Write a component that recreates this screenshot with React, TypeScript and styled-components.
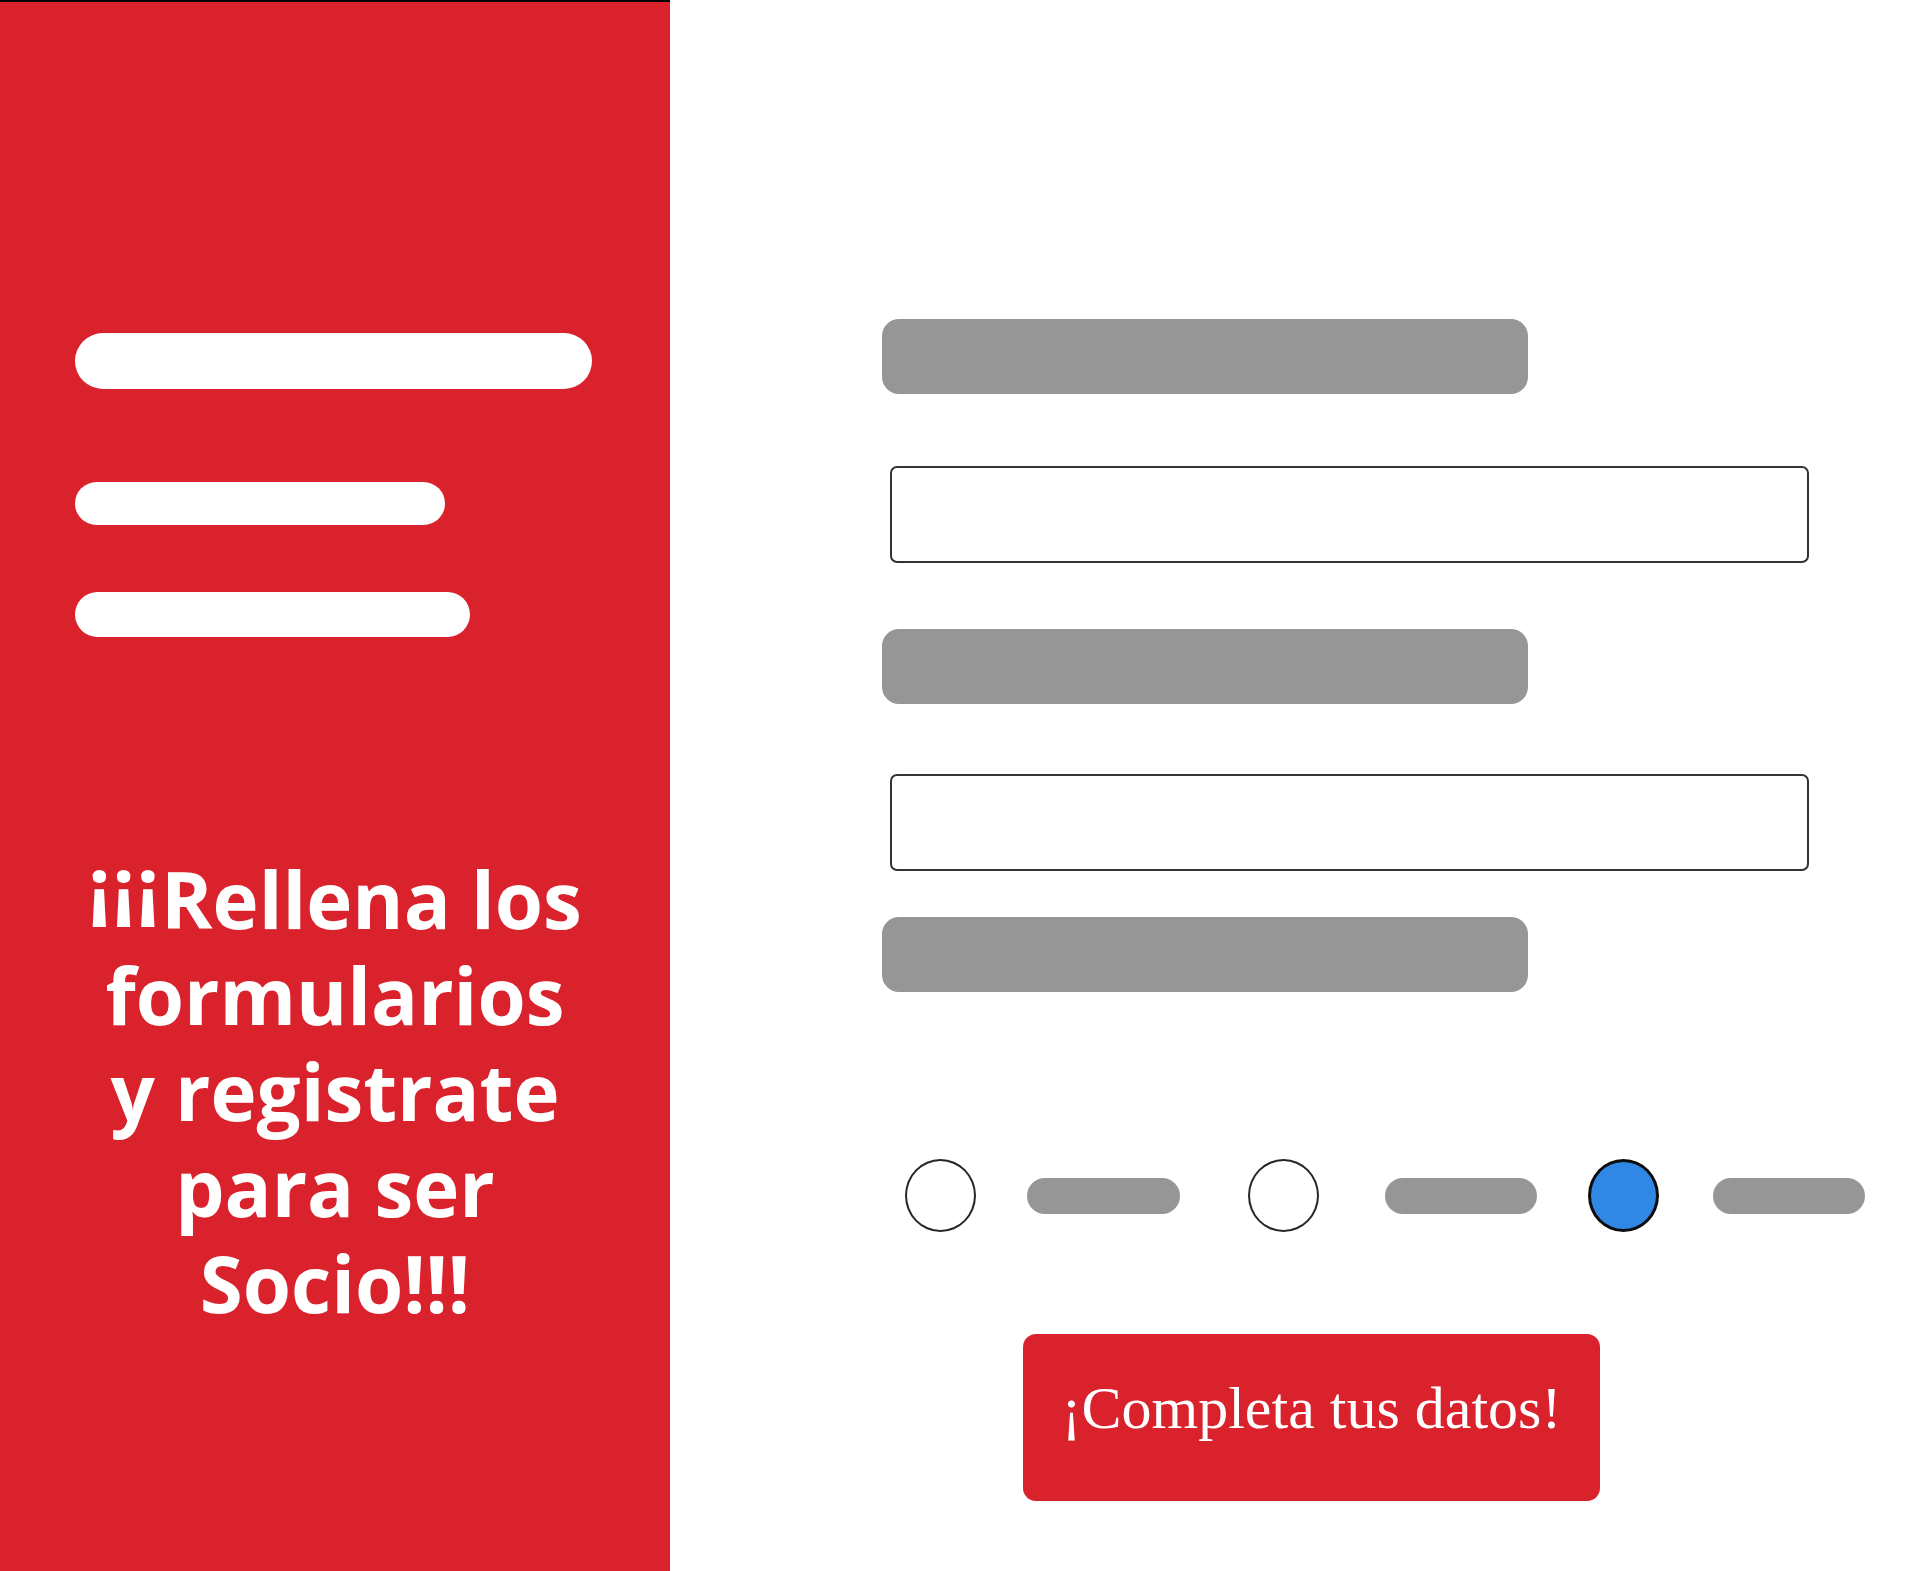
import React from "react";
import styled, { createGlobalStyle } from "styled-components";

const GlobalStyle = createGlobalStyle`
  html, body { margin: 0; padding: 0; background: #ffffff; }
  * { box-sizing: border-box; }
`;

const RED = "#da222d";
const GRAY = "#979697";

const Page = styled.div`
  display: flex;
  width: 1920px;
  height: 1571px;
  overflow: hidden;
`;

const SidePanel = styled.aside`
  width: 670px;
  flex: 0 0 670px;
  background: ${RED};
  border-top: 2px solid #000;
  padding: 331px 0 0 75px;
  display: flex;
  flex-direction: column;
  align-items: flex-start;
`;

const WhiteBar = styled.div<{ $w: number; $h: number; $mb: number }>`
  width: ${(p) => p.$w}px;
  height: ${(p) => p.$h}px;
  margin-bottom: ${(p) => p.$mb}px;
  background: #ffffff;
  border-radius: 999px;
`;

const Headline = styled.h1`
  margin: 214px 0 0 -75px;
  width: 670px;
  text-align: center;
  color: #ffffff;
  font-family: "Open Sans", "Liberation Sans", sans-serif;
  font-weight: 700;
  font-size: 78px;
  line-height: 96px;
  letter-spacing: 0;
`;

const Inverted = styled.span`
  position: relative;
  top: -0.2em;
  letter-spacing: 2px;
`;

const FormPanel = styled.main`
  flex: 1;
  background: #ffffff;
  padding: 319px 0 0 212px;
  display: flex;
  flex-direction: column;
  align-items: flex-start;
`;

const LabelBar = styled.div<{ $mb: number }>`
  width: 646px;
  height: 75px;
  background: ${GRAY};
  border-radius: 17px;
  margin-bottom: ${(p) => p.$mb}px;
`;

const Field = styled.input<{ $mb: number }>`
  display: block;
  width: 919px;
  height: 97px;
  margin: 0 0 ${(p) => p.$mb}px 8px;
  border: 2px solid #333333;
  border-radius: 7px;
  background: #ffffff;
  outline: none;
`;

const StepRow = styled.div`
  display: flex;
  align-items: center;
  margin-bottom: 102px;
`;

const StepDot = styled.span<{ $active?: boolean; $ml: number }>`
  display: block;
  width: 71px;
  height: 73px;
  margin-left: ${(p) => p.$ml}px;
  border-radius: 50%;
  background: ${(p) => (p.$active ? "#3088e4" : "#ffffff")};
  border: ${(p) => (p.$active ? "3px solid #0d0d0d" : "2px solid #262626")};
`;

const StepPill = styled.span<{ $ml: number; $w: number }>`
  display: block;
  width: ${(p) => p.$w}px;
  height: 36px;
  margin-left: ${(p) => p.$ml}px;
  border-radius: 18px;
  background: ${GRAY};
`;

const SubmitButton = styled.button`
  margin-left: 141px;
  width: 577px;
  height: 167px;
  padding: 0 0 18px 0;
  border: none;
  border-radius: 13px;
  background: ${RED};
  color: #ffffff;
  font-family: "Liberation Serif", "Times New Roman", serif;
  font-size: 60px;
  display: flex;
  align-items: center;
  justify-content: center;
  cursor: pointer;
`;

export default function App() {
  return (
    <>
      <GlobalStyle />
      <Page>
        <SidePanel>
          <WhiteBar $w={517} $h={56} $mb={93} />
          <WhiteBar $w={370} $h={43} $mb={67} />
          <WhiteBar $w={395} $h={45} $mb={0} />
          <Headline>
            <Inverted>¡¡¡</Inverted>Rellena los
            <br />
            formularios
            <br />
            y registrate
            <br />
            para ser
            <br />
            Socio!!!
          </Headline>
        </SidePanel>
        <FormPanel>
          <LabelBar $mb={72} />
          <Field $mb={66} aria-label="campo 1" />
          <LabelBar $mb={70} />
          <Field $mb={46} aria-label="campo 2" />
          <LabelBar $mb={167} />
          <StepRow>
            <StepDot $ml={23} />
            <StepPill $ml={51} $w={153} />
            <StepDot $ml={68} />
            <StepPill $ml={66} $w={152} />
            <StepDot $ml={51} $active />
            <StepPill $ml={54} $w={152} />
          </StepRow>
          <SubmitButton>¡Completa tus datos!</SubmitButton>
        </FormPanel>
      </Page>
    </>
  );
}
